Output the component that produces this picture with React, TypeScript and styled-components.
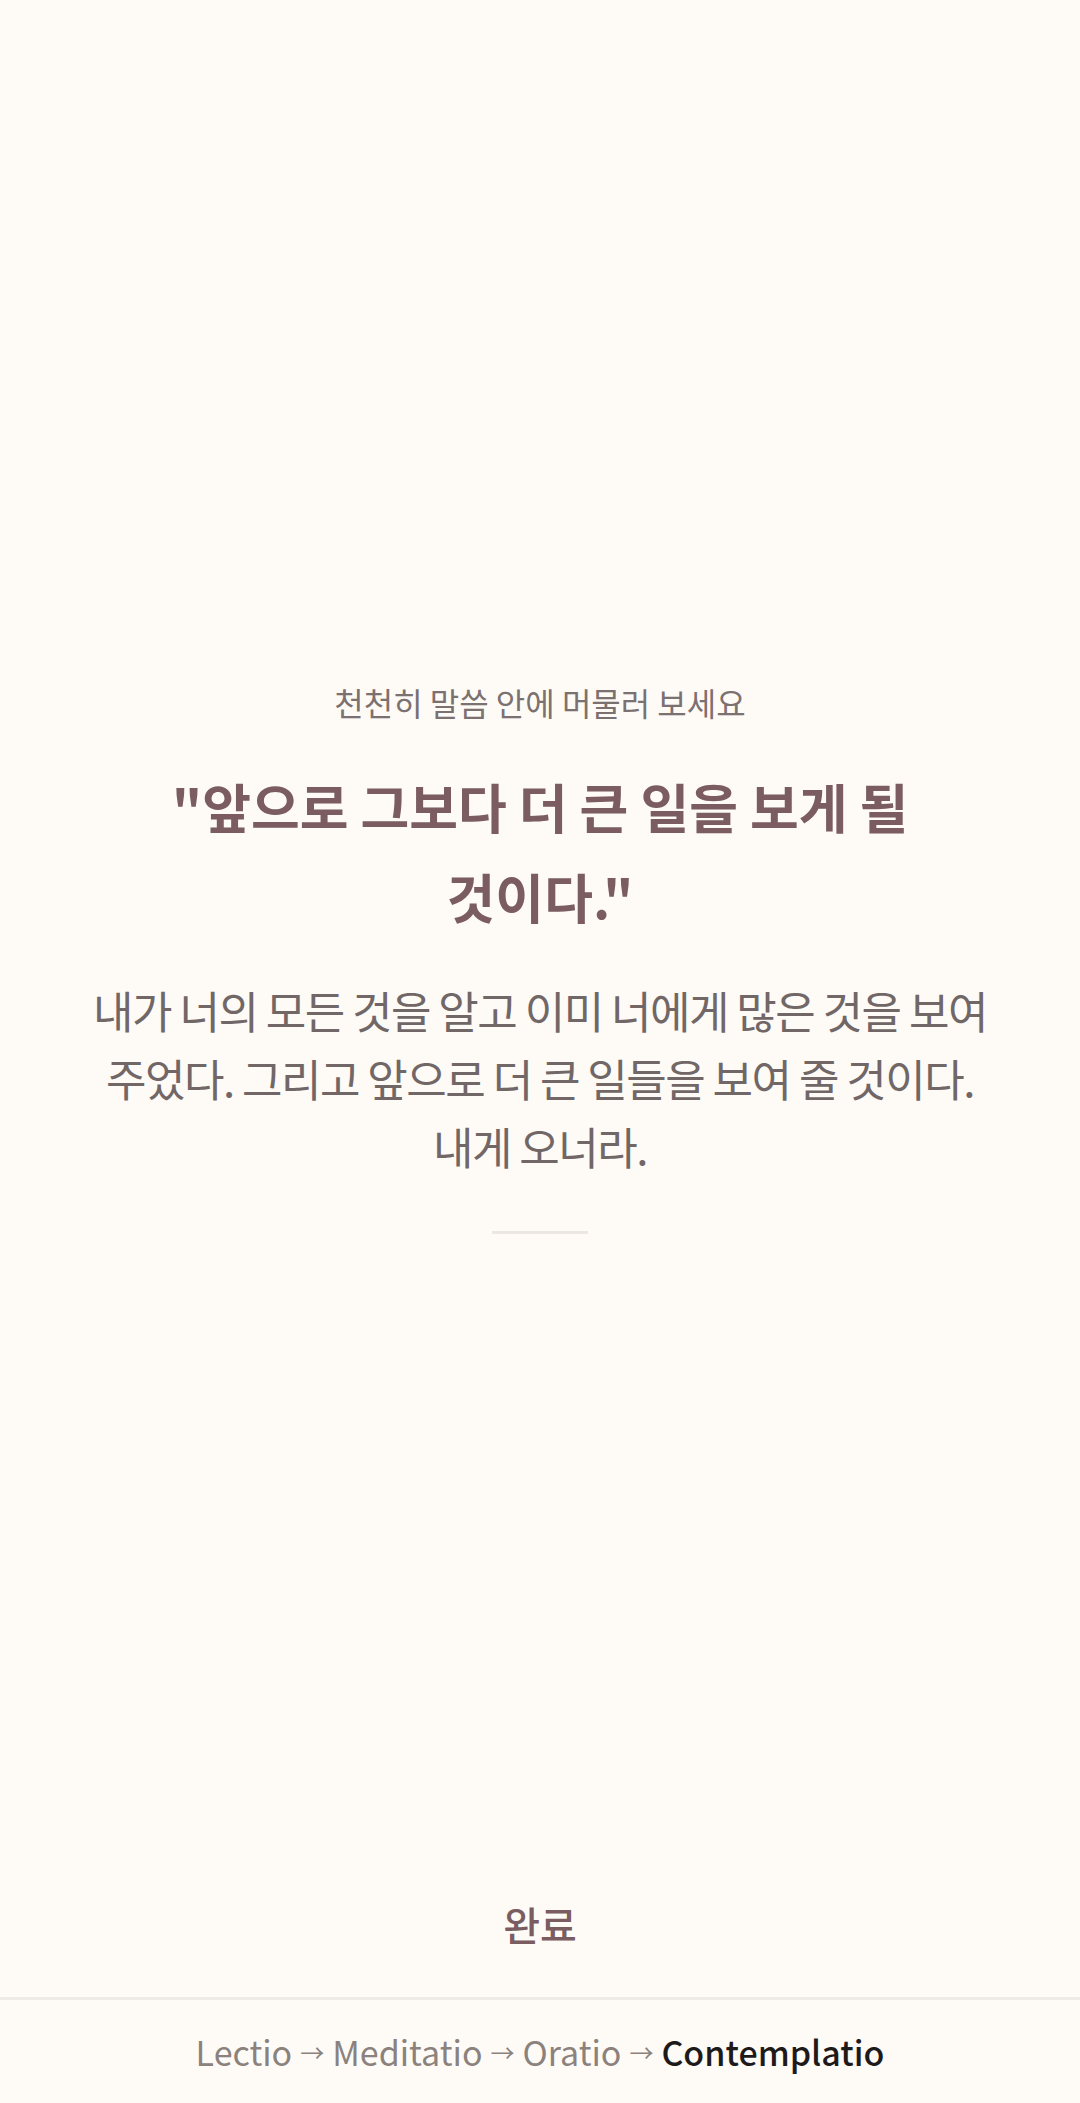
import React from 'react';
import styled, { createGlobalStyle } from 'styled-components';

const GlobalStyle = createGlobalStyle`
  html, body {
    margin: 0;
    padding: 0;
    background: #fefbf7;
  }
  body {
    font-family: "Noto Sans CJK KR", "Noto Sans", sans-serif;
  }
`;

const Page = styled.div`
  display: flex;
  flex-direction: column;
  min-height: 2103px;
  background: #fefbf7;
`;

const Main = styled.main`
  flex: 1;
  display: flex;
  flex-direction: column;
  align-items: center;
  justify-content: center;
  padding: 30px 60px 0;
`;

const Hint = styled.p`
  margin: 0 0 36px;
  font-size: 32px;
  color: #7c7171;
`;

const Verse = styled.h1`
  margin: 0 0 36px;
  max-width: 770px;
  font-size: 53px;
  line-height: 1.7;
  font-weight: 700;
  text-align: center;
  color: #7a5c61;
`;

const Message = styled.p`
  margin: 0;
  font-size: 44px;
  line-height: 1.54;
  letter-spacing: -1.5px;
  text-align: center;
  color: #716767;
`;

const Divider = styled.div`
  width: 96px;
  height: 3px;
  margin-top: 50px;
  background: #ede7e3;
`;

const Actions = styled.div`
  display: flex;
  justify-content: center;
  padding: 0 0 32px;
`;

const DoneButton = styled.button`
  border: none;
  background: none;
  padding: 12px 24px;
  font-family: inherit;
  font-size: 40px;
  font-weight: 500;
  color: #7a5c61;
  cursor: pointer;
`;

const Footer = styled.footer`
  display: flex;
  justify-content: center;
  align-items: center;
  gap: 8px;
  height: 103px;
  border-top: 3px solid #efebe7;
  font-size: 34px;
`;

const Step = styled.span<{ $active?: boolean }>`
  color: ${(p) => (p.$active ? '#1f1a1a' : '#8b827d')};
  font-weight: ${(p) => (p.$active ? 500 : 400)};
`;

const Arrow = styled.span`
  font-size: 24px;
  color: #8b827d;
`;

const steps = ['Lectio', 'Meditatio', 'Oratio', 'Contemplatio'];

export default function App() {
  return (
    <Page>
      <GlobalStyle />
      <Main>
        <Hint>천천히 말씀 안에 머물러 보세요</Hint>
        <Verse>"앞으로 그보다 더 큰 일을 보게 될 것이다."</Verse>
        <Message>
          내가 너의 모든 것을 알고 이미 너에게 많은 것을 보여
          <br />
          주었다. 그리고 앞으로 더 큰 일들을 보여 줄 것이다.
          <br />
          내게 오너라.
        </Message>
        <Divider />
      </Main>
      <Actions>
        <DoneButton>완료</DoneButton>
      </Actions>
      <Footer>
        {steps.map((s, i) => (
          <React.Fragment key={s}>
            {i > 0 && <Arrow>→</Arrow>}
            <Step $active={i === steps.length - 1}>{s}</Step>
          </React.Fragment>
        ))}
      </Footer>
    </Page>
  );
}
